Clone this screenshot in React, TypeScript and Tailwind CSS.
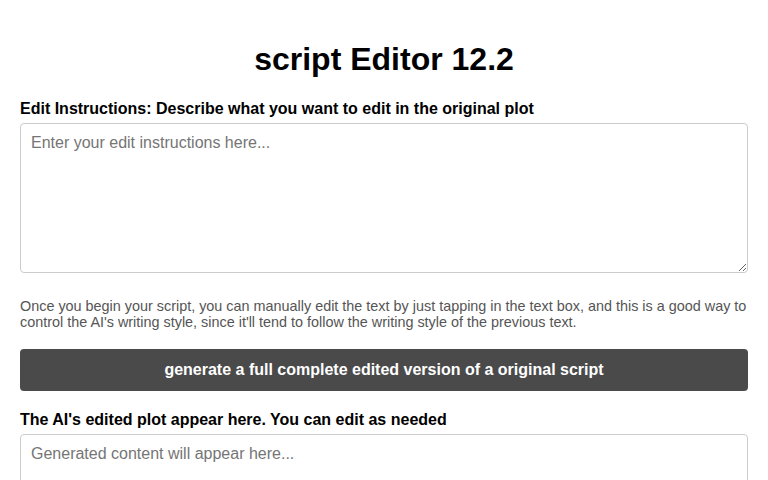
export default function App() {
  return (
    <div className="min-h-screen bg-white px-5 pt-[20px] text-black" style={{ fontFamily: '"Liberation Sans", Arial, sans-serif' }}>
      <h1 className="mt-[21px] mb-[22px] text-center text-[32px] font-bold leading-[37px]">script Editor 12.2</h1>
      <label className="mb-[5px] block text-[16px] font-bold leading-[18px]">
        Edit Instructions: Describe what you want to edit in the original plot
      </label>
      <textarea
        className="block h-[150px] w-full resize-y rounded-[4px] border border-[#ccc] p-[10px] text-[16px] leading-[18px] text-black outline-none placeholder:text-[#757575]"
        placeholder="Enter your edit instructions here..."
      />
      <p className="mt-[25px] text-[14.4px] leading-[16px] text-[#555]">
        Once you begin your script, you can manually edit the text by just tapping in the text box, and this is a good way to control the AI's writing style, since it'll tend to follow the writing style of the previous text.
      </p>
      <button className="mt-[19px] block h-[42px] w-full rounded-[4px] bg-[#4a4a4a] text-[16px] font-bold text-white">
        generate a full complete edited version of a original script
      </button>
      <label className="mt-[20px] mb-[5px] block text-[16px] font-bold leading-[18px]">
        The AI's edited plot appear here. You can edit as needed
      </label>
      <textarea
        className="block h-[150px] w-full resize-y rounded-[4px] border border-[#ccc] p-[10px] text-[16px] leading-[18px] text-black outline-none placeholder:text-[#757575]"
        placeholder="Generated content will appear here..."
      />
    </div>
  );
}
